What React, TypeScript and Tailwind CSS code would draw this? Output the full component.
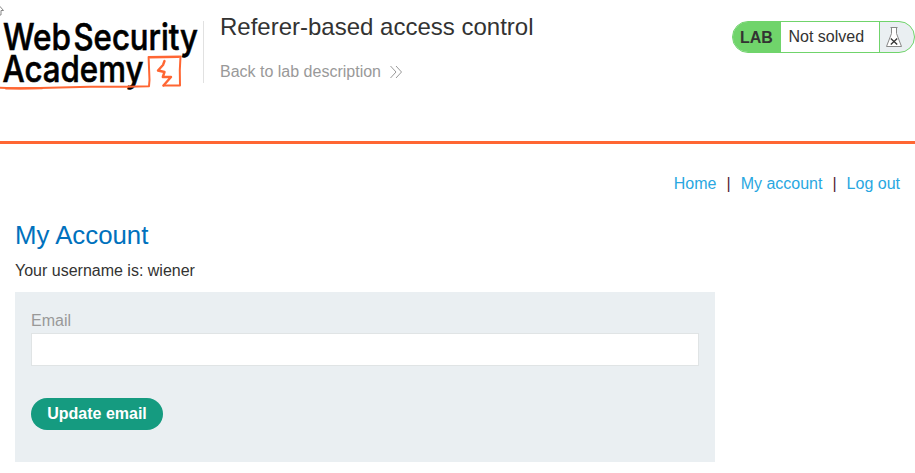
function Logo() {
  return (
    <svg width="200" height="96" viewBox="0 0 200 96" className="block shrink-0 overflow-visible" role="img" aria-label="Web Security Academy">
      <g fontFamily="Inter, 'Liberation Sans', sans-serif" fontSize="36.5" fontWeight="500" fill="#000" stroke="#000" strokeWidth="0.6">
        <text x="3" y="49.5" textLength="68" lengthAdjust="spacingAndGlyphs">Web</text>
        <text x="73.500" y="49.5" textLength="124.500" lengthAdjust="spacingAndGlyphs">Security</text>
        <text x="2.500" y="82" textLength="141" lengthAdjust="spacingAndGlyphs">Academy</text>
      </g>
      <g fill="none" stroke="#ff6633" strokeWidth="2" strokeLinejoin="round" strokeLinecap="round">
        <path d="M0 87.7L20 88.5L60 87.5L90 86.800L127 86.800L149 86.2L149.5 80L148.600 57L180.5 56.5L179.800 70L180 85.5L163.500 85.500" />
        <path d="M164.500 61L163 65L158 70.500L164.500 72L162.800 77L171 77L163.500 85.500" strokeWidth="2.400" />
        <path d="M6 88.400L42 88.200M150 57.500L178 57" strokeWidth="2.200" />
      </g>
      <path d="M-3 10L0 6.500L3.500 10.500H1V15H-1" fill="none" stroke="#888" strokeWidth="1" />
    </svg>
  );
}

function Flask() {
  return (
    <svg width="18" height="22" viewBox="0 0 18 22" fill="none" strokeWidth="1">
      <path d="M6.500 1.500V7.500L1.500 20.500H16.500L11.500 7.500V1.500Z" fill="#fff" stroke="#888" />
      <path d="M5.500 1.500H12.500" stroke="#888" />
      <path d="M5.800 12.500L12.200 18.500M12.200 12.500L5.800 18.500" stroke="#333" strokeWidth="1.300" />
    </svg>
  );
}

export default function App() {
  return (
    <div className="h-[473px] w-[915px] overflow-hidden bg-white font-['Liberation_Sans',Arial,sans-serif] text-base leading-6 text-[#333332]">
      <header className="flex h-36 items-start border-b-3 border-[#ff6633]">
        <Logo />
        <div className="mt-[21px] ml-[3px] h-[62px] w-px bg-[#e1e1e1]" />
        <div className="ml-4 pt-[11px]">
          <h1 className="text-2xl leading-8">Referer-based access control</h1>
          <a className="mt-[17px] flex items-center text-[#999]">
            Back to lab description
            <svg className="ml-2" width="14" height="14" viewBox="0 0 14 14" fill="none" stroke="#999">
              <path d="M1.500 1L7 7L1.500 13M7 1L12.500 7L7 13" />
            </svg>
          </a>
        </div>
        <div className="mt-[21px] ml-auto flex h-8 w-[183px] overflow-hidden rounded-full border border-[#70d46b] bg-[#eaeff2]">
          <span className="w-12 bg-[#70d46b] pl-[7px] font-bold leading-[31px]">LAB</span>
          <span className="w-[99px] border-r border-[#70d46b] bg-white pl-[7.5px] leading-[29px]">Not solved</span>
          <span className="pt-1 pl-[5px]"><Flask /></span>
        </div>
      </header>
      <main className="px-[15px] pt-7">
        <nav className="flex justify-end whitespace-pre text-[#29a7e1]">
          <a>Home</a>
          <span className="px-[10px] text-[#522430]">|</span>
          <a>My account</a>
          <span className="px-[10px] text-[#522430]">|</span>
          <a>Log out</a>
        </nav>
        <h2 className="mt-[23px] text-[25.8px] leading-8 text-[#0071bd]">My Account</h2>
        <p className="mt-2">Your username is: wiener</p>
        <form className="mt-[9px] h-[170px] w-[700px] bg-[#eaeff2] px-4 pt-[17px]">
          <label htmlFor="email" className="block h-6 text-[#999]">Email</label>
          <input id="email" type="email" className="block h-[33px] w-[668px] border border-[#e0e4e5] bg-white px-2 outline-none" />
          <button type="button" className="mt-8 block h-8 w-[132px] rounded-full bg-[#159b80] text-center font-bold text-white">Update email</button>
        </form>
      </main>
    </div>
  );
}
